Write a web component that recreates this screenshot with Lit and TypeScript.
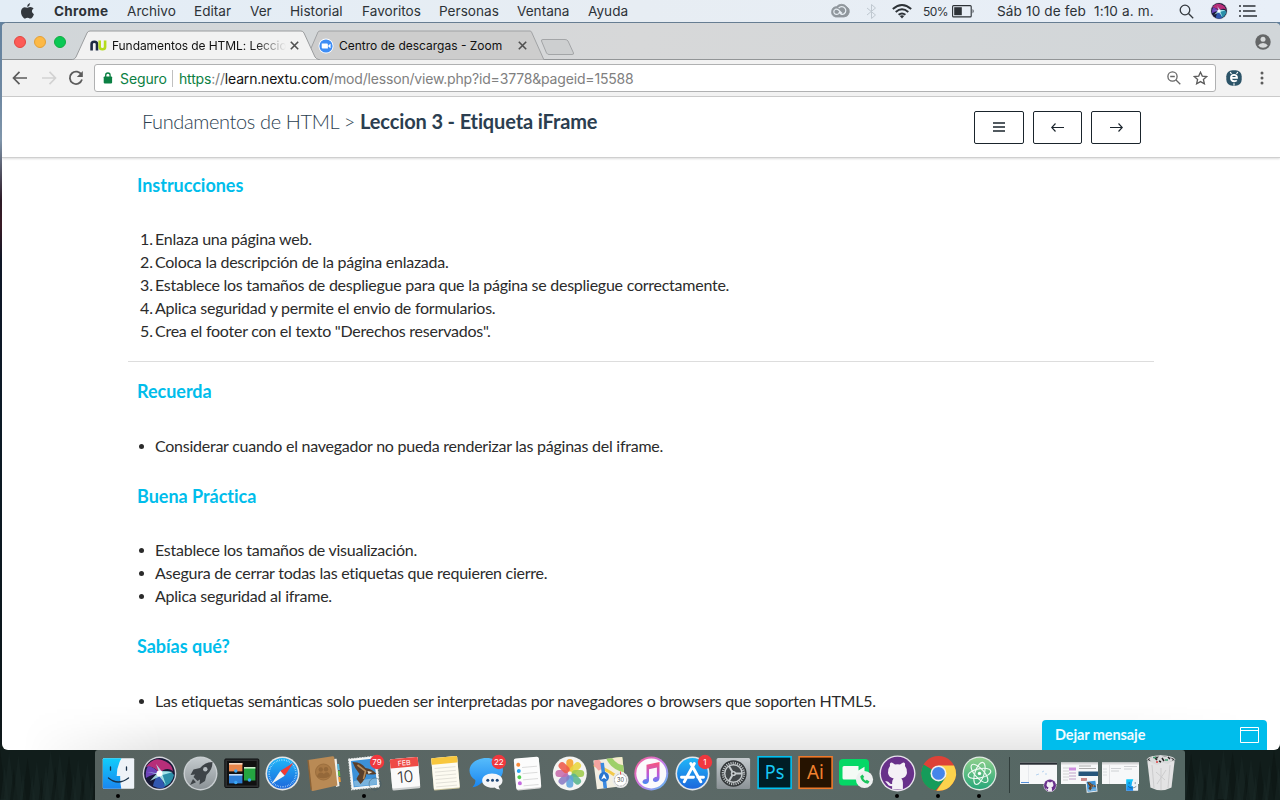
import { LitElement, html, css, svg } from "lit";
import { customElement } from "lit/decorators.js";

const MENU: [string, number][] = [
  ["Chrome", 73], ["Archivo", 67], ["Editar", 56], ["Ver", 40], ["Historial", 72],
  ["Favoritos", 77], ["Personas", 78], ["Ventana", 71], ["Ayuda", 60],
];

const STEPS = [
  "Enlaza una página web.",
  "Coloca la descripción de la página enlazada.",
  "Establece los tamaños de despliegue para que la página se despliegue correctamente.",
  "Aplica seguridad y permite el envio de formularios.",
  'Crea el footer con el texto "Derechos reservados".',
];

const badge = (n: string, cx: number, cy: number) => svg`
  <circle cx=${cx} cy=${cy} r="7.2" fill="#f0383e"/>
  <text x=${cx} y=${cy + 2.8} text-anchor="middle" font-size="8" fill="#fff" font-family="Inter, sans-serif">${n}</text>`;

const octocat = svg`<path d="M-7.5 -8.5 Q-8 -12.5 -6 -12.2 Q-4.5 -12 -2.5 -10 Q0 -10.6 2.5 -10 Q4.5 -12 6 -12.2 Q8 -12.5 7.5 -8.5 Q10 -5.5 9.5 -1.5 Q8.6 3.2 3.8 4 Q5.4 5.4 5.4 8 V15 H-5.4 V11.5 Q-9 12 -10.4 9 Q-11 7.5 -12.5 6.8 Q-9.5 6 -8 8.5 Q-7 10 -5.4 9.3 V8 Q-5.4 5.4 -3.8 4 Q-8.6 3.2 -9.5 -1.5 Q-10 -5.5 -7.5 -8.5Z" fill="#f4f0f6"/>`;

const bird = svg`
  <rect x="4.5" y="7.5" width="28" height="31" fill="#f4f6f6" stroke="#e4e7e8" stroke-dasharray="1.5 1.2" transform="rotate(-6 18 23)"/>
  <rect x="6.8" y="9.8" width="23.4" height="26.4" fill="#3c91d8" transform="rotate(-6 18 23)"/>
  <path d="M8.5 31 L31 28 L31.5 34.5 L9 36.5Z" fill="#79b3dd"/>
  <path d="M7 12 Q16 12 20 18 Q27 19 31 24 Q24 25 21 24 Q20 29 15 34 L11 29 Q12 26 14 24 Q9 18 7 12Z" fill="#5a3f2b"/>
  <path d="M12 15 L20 21 L18 29" stroke="#b58a58" stroke-width="1.6" fill="none"/>
  <path d="M22 21 l5 1 l-4 2z" fill="#eee3cd"/>`;

const petals = ["#f6a127", "#e9d53c", "#9ecb4b", "#58b58c", "#5fa3dc", "#8a7bc4", "#c76bab", "#ee5a4a"];

const finder = svg`
  <rect x="4.8" y="8.3" width="31.4" height="30.4" rx="1" fill="#eef3f8"/>
  <path d="M5.8 8.3 H23.5 Q18.8 16 18.7 26 H22.2 Q22 33 23.3 38.7 H5.8 Q4.8 38.7 4.8 37.7 V9.3 Q4.8 8.3 5.8 8.3Z" fill="url(#finderBlue)"/>
  <path d="M12.5 17v3.2 M28.5 17v3.2" stroke="#173049" stroke-width="1.3" stroke-linecap="round"/>
  <path d="M10.5 28 Q20 36 30.5 28" stroke="#173049" stroke-width="1.3" fill="none" stroke-linecap="round"/>`;

const siriBall = svg`
  <circle cx="20.5" cy="23.4" r="16.8" fill="#d5d5dc"/>
  <circle cx="20.5" cy="23.4" r="15.4" fill="#181a38"/>
  <path d="M7 17 Q14 7 23 10 Q33 13 34 21 Q27 16 20.5 23.4 Q14 15 7 17Z" fill="#b72e79"/>
  <path d="M7 28 Q6 21 9 16 Q15 17 20.5 23.4 Q13 24 7 28Z" fill="#6d43b8"/>
  <path d="M20.5 23.4 Q30 18 35 25 Q33 34 25 37 Q25 28 20.5 23.4Z" fill="#2b8fa9"/>
  <path d="M20.5 23.4 Q15 29 14 36 Q22 40 26 37 Q24 30 20.5 23.4Z" fill="#3157b0"/>
  <path d="M20.5 23.4 L17 14 L22.5 21 L34 22 L23.5 25 L27 35 L20.5 26.5 L11 31 L17.5 24 L8 22Z" fill="#b8f3f4" opacity=".85"/>
  <circle cx="20.5" cy="23.4" r="3" fill="#fff"/>`;

const miniWindow = (app: unknown) => svg`
  <rect x="2" y="12.5" width="37" height="21.5" fill="#f7f8f9"/>
  ${app}`;

const githubIcon = svg`
  <circle cx="20.5" cy="23.4" r="18" fill="#e7e2ec"/>
  <circle cx="20.5" cy="23.4" r="16.6" fill="#68308a"/>
  <g transform="translate(20.5 24.6)">${octocat}</g>`;

const ICONS: { art: unknown; dot?: boolean }[] = [
  { art: finder, dot: true },
  { art: siriBall },
  { art: svg`
    <circle cx="20.5" cy="23.4" r="17" fill="#c9ced1"/><circle cx="20.5" cy="23.4" r="15.6" fill="url(#steel)"/>
    <path d="M32.5 12 Q25 12 20 18 L13.5 19.5 L10.5 25 L15 24.5 L13.5 27 L17.5 31 L20 29.5 L19.5 34.5 L25 31 L26.5 25 Q32.5 20 32.5 12Z" fill="#3e4347"/>
    <circle cx="25.3" cy="19.3" r="2.2" fill="#b5bbbf"/><path d="M13 29 L10 35 L16 32.3Z" fill="#3e4347"/>` },
  { art: svg`
    <rect x="3.8" y="9" width="34" height="28.5" rx="1" fill="#2c2e2f" stroke="#0d0f10"/>
    <rect x="6" y="11" width="29.6" height="24.4" fill="#111"/>
    <rect x="8" y="13" width="13.4" height="8.4" fill="#e8864b"/><rect x="8" y="13" width="13.4" height="1.6" fill="#f3d9c3"/>
    <rect x="8" y="24" width="13.4" height="9.4" fill="#2f7fd6"/><rect x="8" y="24" width="13.4" height="1.6" fill="#c9dcf2"/>
    <rect x="23" y="17.5" width="11.4" height="13" fill="#25a541"/><rect x="23" y="17" width="11.4" height="1.6" fill="#cfeecd"/>
    <circle cx="14.8" cy="21" r="1.7" fill="#3aa8f5"/><circle cx="14.8" cy="32.5" r="1.7" fill="#3aa8f5"/><circle cx="28.4" cy="30" r="1.7" fill="#3aa8f5"/>` },
  { art: svg`
    <circle cx="20.5" cy="23.4" r="17" fill="#e3e5e7"/><circle cx="20.5" cy="23.4" r="15.4" fill="url(#safariBlue)"/>
    <circle cx="20.5" cy="23.4" r="13.4" fill="none" stroke="#d6efff" stroke-width="1.6" stroke-dasharray=".5 1.25"/>
    <path d="M31.5 12.8 L18.3 21 L22.7 25.8Z" fill="#f03a34"/><path d="M9.5 34 L18.3 21 L22.7 25.8Z" fill="#f3f3f3"/>` },
  { art: svg`
    <path d="M30 9 L33.6 8.8 L36.5 36 L33 37Z" fill="#f2efe9"/>
    <path d="M34 14 l2 0 l.8 6 l-2 0z" fill="#58b9dd"/><path d="M34.8 21 l2 0 l.6 5 l-2 0z" fill="#63b443"/><path d="M35.3 27 l2 0 l.5 5 l-2 0z" fill="#f09b38"/>
    <path d="M5 10 L29.5 6.2 Q31 6 31.2 7.4 L34.4 35.5 L10 41 Q8.6 41.3 8.3 39.8 L5 12Z" fill="#b98a55"/>
    <path d="M5 10 L8.3 39.8" stroke="#8b6236" stroke-width="1.4"/>
    <circle cx="20.5" cy="22" r="8" fill="#a97945" stroke="#9c6f3e"/>
    <circle cx="17.8" cy="19.5" r="2.2" fill="#946839"/><circle cx="23" cy="19.2" r="2.2" fill="#946839"/><path d="M14 27 Q14.5 22.5 18 22.5 Q20.5 22.5 20.8 24 Q22 22 24.5 22.3 Q27 23 27 26 Q22 30 14 27Z" fill="#946839"/>` },
  { art: svg`<g transform="translate(1.5 0)">${bird}</g>
    <circle cx="31" cy="34" r="6" fill="none" stroke="#3b5663" stroke-width="1" opacity=".45"/>${badge("79", 33, 12)}`, dot: true },
  { art: svg`
    <g transform="rotate(-5 20 23)"><rect x="6" y="8" width="28" height="31.5" rx="1.5" fill="#cfd2d2"/><rect x="6" y="8" width="28" height="29.5" rx="1.5" fill="#fafafa"/>
    <path d="M6 17.3 V9.5 Q6 8 7.5 8 H32.5 Q34 8 34 9.5 V17.3Z" fill="#ee4b46"/>
    <text x="20" y="15.4" text-anchor="middle" font-size="7" fill="#fff" font-family="Inter, sans-serif">FEB</text>
    <text x="20" y="32.5" text-anchor="middle" font-size="16" fill="#333" font-family="Inter, sans-serif" font-weight="300">10</text></g>` },
  { art: svg`
    <g transform="rotate(-5 20 23)"><rect x="6.5" y="7" width="26" height="32.5" rx="1" fill="#c9c29a"/><rect x="6.5" y="7" width="26" height="31.5" rx="1" fill="#fdfbf1"/>
    <rect x="6.5" y="7" width="26" height="6.5" rx="1" fill="#f8c73d"/>
    <path d="M9 17.5h21M9 21.2h21M9 24.9h21M9 28.6h21M9 32.3h21M9 36h21" stroke="#d9d7cf" stroke-width=".7"/></g>` },
  { art: svg`
    <path d="M19.5 8 C29 8 36 13.5 36 20.5 C36 27.5 29 33 19.5 33 Q17 33 14.8 32.5 Q11 36.5 5.5 37.3 Q9 34 8.3 30 Q2.5 26.5 2.5 20.5 C2.5 13.5 10 8 19.5 8Z" fill="url(#chatBlue)"/>
    <path d="M25 23.5 C31 23.5 35.5 26.5 35.5 30.5 Q35.5 34 31.7 36 Q31.5 38 33.3 39.6 Q29.5 39.3 27.5 37.5 Q25.5 38 23.5 37.7 C18.5 37 15.2 34.3 15.2 30.5 C15.2 26.5 19.5 23.5 25 23.5Z" fill="#f5f6f8"/>
    <circle cx="20.8" cy="30.3" r="1.5" fill="#1e4676"/><circle cx="25.5" cy="30.3" r="1.5" fill="#1e4676"/><circle cx="30.2" cy="30.3" r="1.5" fill="#1e4676"/>${badge("22", 31.8, 12)}` },
  { art: svg`
    <g transform="rotate(-5 20 23)"><rect x="7" y="8" width="25" height="31.5" rx="2" fill="#d4d4d4"/><rect x="7" y="7.5" width="25" height="30.8" rx="2" fill="#fcfcfc"/>
    <circle cx="11" cy="14" r="2" fill="#f98b38"/><circle cx="11" cy="20.2" r="2" fill="#2aa5f2"/><circle cx="11" cy="26.4" r="2" fill="#51cf4f"/><circle cx="11" cy="32.6" r="2" fill="#c56be0"/>
    <path d="M14.5 17h15M14.5 23.2h15M14.5 29.4h15M14.5 35.4h15" stroke="#cfcfcf" stroke-width=".7"/></g>` },
  { art: svg`
    <circle cx="20.8" cy="23.4" r="17" fill="#f4f4f2"/>
    ${petals.map((c, i) => svg`<rect x="17.3" y="9" width="7" height="12.5" rx="3.5" fill=${c} opacity=".88" transform=${`rotate(${i * 45} 20.8 23.4)`}/>`)}` },
  { art: svg`
    <g transform="rotate(-7 20 23)"><rect x="5" y="8.5" width="29" height="29" fill="#f3efe2"/><path d="M18 8.5H34V24Q22 20 18 8.5Z" fill="#9ed069"/><path d="M24 8.5H34V17Q27 15 24 8.5Z" fill="#f6ead0"/>
    <path d="M5 13 Q20 20 33 34" stroke="#f2c94b" stroke-width="3" fill="none"/><path d="M6 8.5 h5 l4 8 l-6 3 l-4 -6z" fill="#f4a4a0"/>
    <path d="M13.5 12v25.5" stroke="#3c8ae0" stroke-width="3.5"/></g>
    <circle cx="14" cy="27" r="5" fill="#2876cf"/><path d="M14 23.8 l2.8 5.6 l-2.8 -1.4 l-2.8 1.4z" fill="#fff"/>
    <circle cx="30.5" cy="30" r="8" fill="#e9eaeb"/><circle cx="30.5" cy="30" r="6" fill="#fff" stroke="#777" stroke-width=".8" stroke-dasharray=".7 .8"/>
    <text x="30.5" y="32" text-anchor="middle" font-size="5.6" fill="#444" font-family="Inter, sans-serif">30</text><path d="M30.5 21.5v3" stroke="#e55"/>` },
  { art: svg`
    <circle cx="20.3" cy="23.4" r="17" fill="url(#tunesRing)"/><circle cx="20.3" cy="23.4" r="15" fill="#fbfafc"/>
    <path d="M15.5 14.8 L28.5 12 V28 Q28.3 31.4 24.8 31.9 Q21.8 32 21.9 29.6 Q22.2 27.2 25.9 26.8 V17.5 L18 19.2 V30.5 Q17.7 33.6 14.3 34 Q11.3 34 11.5 31.6 Q11.9 29.2 15.5 28.9Z" fill="url(#tunesNote)"/>` },
  { art: svg`
    <circle cx="20.5" cy="23.4" r="17" fill="#e2e5e9"/><circle cx="20.5" cy="23.4" r="15.4" fill="url(#safariBlue)"/>
    <path d="M18.8 13.5 L28.8 31.8 M22.3 13.5 L12.3 31.8 M9.5 27.3 H21.5 M25.8 27.3 H31.5" stroke="#fff" stroke-width="2.9" stroke-linecap="round"/>${badge("1", 33, 12)}` },
  { art: svg`
    <rect x="3.6" y="8" width="33.5" height="31" rx="1.5" fill="url(#steel)"/>
    <circle cx="20.4" cy="23.5" r="13.2" fill="#34383a"/><circle cx="20.4" cy="23.5" r="10.5" fill="none" stroke="#bfc4c6" stroke-width="2.4" stroke-dasharray="1.1 1.1"/>
    <circle cx="20.4" cy="23.5" r="8.7" fill="#43484a" stroke="#c6cbcd" stroke-width="1.4"/>
    <path d="M20.4 23.5 H29 M20.4 23.5 L16 16 M20.4 23.5 L16 31" stroke="#c6cbcd" stroke-width="2"/><circle cx="20.4" cy="23.5" r="2.6" fill="#c6cbcd"/><circle cx="20.4" cy="23.5" r="1.1" fill="#333"/>` },
  { art: svg`
    <rect x="4.1" y="6.8" width="33" height="31.5" fill="#001d26" stroke="#00c2f3" stroke-width="1.6"/>
    <text x="20.6" y="29" text-anchor="middle" font-size="19" font-family="'Noto Sans', sans-serif" fill="#17c8f6" textLength="19.5" lengthAdjust="spacingAndGlyphs">Ps</text>` },
  { art: svg`
    <rect x="4.1" y="6.8" width="33" height="31.5" fill="#261300" stroke="#ef7a2b" stroke-width="1.6"/>
    <text x="20.4" y="29" text-anchor="middle" font-size="19" font-family="'Noto Sans', sans-serif" fill="#f2822f" textLength="17" lengthAdjust="spacingAndGlyphs">Ai</text>` },
  { art: svg`
    <rect x="3" y="9" width="30" height="26.5" rx="4" fill="#05d866"/>
    <path d="M8 16 h14.5 v13.5 h-14.5 Q6.5 29.5 6.5 28 V17.5 Q6.5 16 8 16z M22.5 20.5 L28.5 16.8 V28 L22.5 25z" fill="#f4faf5"/>
    <circle cx="28.5" cy="29.5" r="8.6" fill="#eef0f0"/><path d="M24.2 26.5 Q25.4 32.8 32 33.8 L33.5 31.5 L30.8 29.8 L29.7 30.8 Q27.6 29.6 27.2 27.9 L28.2 26.8 L26.4 24.5Z" fill="#1ac45b"/>` },
  { art: githubIcon, dot: true },
  { art: svg`
    <circle cx="20.5" cy="23.4" r="17.4" fill="#dd4237"/>
    <path d="M20.5 23.4 L5.6 14.4 A17.4 17.4 0 0 0 17.5 40.6 L28 27.8Z" fill="#159c5a"/>
    <path d="M20.5 15.4 H36 A17.4 17.4 0 0 1 18.5 40.7 L27.6 27.5Z" fill="#fcd34c"/>
    <circle cx="20.5" cy="23.4" r="8" fill="#f1f1f1"/><circle cx="20.5" cy="23.4" r="6.4" fill="#4585ea"/>`, dot: true },
  { art: svg`
    <circle cx="20.5" cy="23.4" r="17" fill="#dfe9e3"/><circle cx="20.5" cy="23.4" r="15.7" fill="url(#atomGreen)"/>
    <g fill="none" stroke="#effaf3" stroke-width="1.1"><ellipse cx="20.5" cy="23.4" rx="4.6" ry="11.5" transform="rotate(18 20.5 23.4)"/><ellipse cx="20.5" cy="23.4" rx="4.6" ry="11.5" transform="rotate(78 20.5 23.4)"/><ellipse cx="20.5" cy="23.4" rx="4.6" ry="11.5" transform="rotate(-42 20.5 23.4)"/></g><circle cx="20.5" cy="23.4" r="1.7" fill="#fff"/>`, dot: true },
];

const RIGHT_ICONS = [
  miniWindow(svg`<rect x="2" y="12.5" width="37" height="2.2" fill="#272c33"/><path d="M10.5 15v19" stroke="#dfe3e8" stroke-width=".7"/><path d="M3 32.5h8" stroke="#5590d8"/><path d="M18 25l3-1M24 22l2-1M27 24l2 0" stroke="#b6d3f0"/>
    <g transform="translate(32 35.5) scale(.36) translate(-20.5 -23.4)">${githubIcon}</g>`),
  miniWindow(svg`<rect x="2" y="12.5" width="37" height="2" fill="#d8d8da"/><path d="M4 18h6M4 21h6M4 24h6M4 27h6M4 30h5" stroke="#c9c9cc" stroke-width=".8"/><rect x="10" y="17.5" width="7" height="3" fill="#d08fe0"/><path d="M10 23h7M10 26h7M10 29h7" stroke="#c0a0c8"/><path d="M20 16h12M20 18.5h17" stroke="#999" stroke-width=".8"/><rect x="19.5" y="21.5" width="19.5" height="4.5" fill="#27567b"/><rect x="22" y="28" width="6" height="3" fill="#c88"/>
    <g transform="translate(25.5 27.5) scale(.38)">${bird}</g>`),
  miniWindow(svg`<rect x="2" y="12.5" width="37" height="2" fill="#d8d8da"/><path d="M9.5 15v19" stroke="#e2e2e5"/><path d="M11 18.5h10M11 21h8M24 16.5h13M24 19h8" stroke="#c4c6ca" stroke-width=".8"/><path d="M3 19h4M3 22h4M3 25h4" stroke="#d3d6da" stroke-width=".8"/>
    <g transform="translate(24.4 26) scale(.38)">${finder}</g>`),
  svg`<path d="M6.3 11 L9.4 37.5 Q20 43 30.5 37.5 L33.6 11Z" fill="#e3e3e4"/>
    <path d="M11 15 L13 38 M20 18 V40 M29 15 L27 38 M15 22 L24 30 M25 20 L16 34" stroke="#c9c9cb" stroke-width=".9"/>
    <ellipse cx="20" cy="9.5" rx="13.7" ry="3.6" fill="#3b3b3c" stroke="#ececec"/>
    <path d="M8 9 l4-3 l4 3 l3-4 l5 2 l4-1 l4 4 l-5 4 l-6-1 l-5 2 l-5-2z" fill="#d9dadb"/><path d="M14 8l2 2M21 8l2 3M27 7l2 2M18 11l2 1" stroke="#222" stroke-width="1.5"/><path d="M12 7.5h3M24 10h3" stroke="#3f9c72" stroke-width="1.3"/><circle cx="16" cy="12" r="1" fill="#d44"/>`,
];

@customElement("app-root")
export class AppRoot extends LitElement {
  static styles = css`
    :host { display: block; width: 1280px; height: 800px; overflow: hidden; font-family: Inter, sans-serif; }
    * { box-sizing: border-box; }
    svg { display: block; flex: none; }
    .desktop { width: 1280px; height: 800px; display: flex; flex-direction: column; position: relative; overflow: hidden;
      background: linear-gradient(#5f7f9d 0, #7089a2 100px, #8096ab 140px, #2c1a26 200px, #3a1a25 225px, #0e1626 260px, #0c1a26 420px, #0c161a 700px, #131d1d 800px); }
    .menubar { height: 22px; flex: none; display: flex; align-items: center; background: linear-gradient(90deg, #e3edf6, #e7edf3 50%, #e8eff8); color: #2d3237; font-size: 13.6px; }
    .apple { margin-left: 20px; }
    .menus { display: flex; margin-left: 19px; }
    .menus span { white-space: nowrap; }
    .menus span:first-child { font-weight: 700; letter-spacing: .3px; }
    .status { margin-left: auto; display: flex; align-items: center; }
    .pct { font-size: 12px; letter-spacing: -.55px; width: 29px; white-space: nowrap; margin-left: 11px; }
    .clock { width: 157px; margin-left: 22px; white-space: pre; letter-spacing: .13px; }
    .window { position: relative; height: 728px; flex: none; border-top: 1px solid #667d92; margin-left: 2px; border-radius: 5px 5px 6px 6px; background: #fff; overflow: hidden; display: flex; flex-direction: column; }
    .strip { height: 37px; flex: none; display: flex; background: linear-gradient(90deg, #d1d6d9, #d7d8d9 50%, #d1d6d9); border-bottom: 1px solid #929597; position: relative; }
    .lights { display: flex; gap: 8px; padding: 13px 0 0 12px; width: 71px; }
    .light { width: 12px; height: 12px; border-radius: 50%; border: 1px solid #e2463f; background: #fc5b57; }
    .light.y { background: #fdb946; border-color: #e4a035; }
    .light.g { background: #0ac855; border-color: #12ac40; }
    .tabs { position: absolute; left: 0; top: 0; }
    .tab-row { position: relative; display: flex; align-items: center; height: 29px; margin-top: 8px; color: #111; font-size: 12px; white-space: nowrap; }
    .t1 { width: 174px; margin-left: 5px; letter-spacing: -.08px; -webkit-mask-image: linear-gradient(90deg, #000 82%, transparent); }
    .t2 { width: 175px; margin-left: 5px; }
    .account { margin: 11px 9px 0 auto; }
    .toolbar { height: 37px; flex: none; display: flex; align-items: center; background: #f2f2f2; border-bottom: 1px solid #ccc; padding-left: 10px; }
    .omni { display: flex; align-items: center; width: 1122px; height: 28px; margin-left: 10px; border: 1px solid #b0b1b2; border-radius: 3px; background: #fff; font-size: 14px; padding-left: 8px; color: #808080; white-space: nowrap; }
    .secure { color: #0b8043; margin-left: 7px; width: 52px; letter-spacing: -.1px; }
    .url { border-left: 1px solid #c0c0c0; padding-left: 6px; line-height: 17px; flex: 1; letter-spacing: -.175px; }
    .url i { font-style: normal; color: #0b8043; } .url b { font-weight: 400; color: #111; }
    .site { flex: 1; font-family: Lato, sans-serif; color: #2b2b2b; display: flex; flex-direction: column; }
    .head { height: 61px; flex: none; display: flex; border-bottom: 1px solid #cfcfcf; box-shadow: 0 1px 2px #0002; padding-left: 140px; }
    .crumb { margin: 11px 0 0; font-size: 20px; line-height: 26px; font-weight: 300; color: #2b3e50; width: 832px; white-space: nowrap; letter-spacing: -.37px; }
    .crumb b { font-weight: 700; letter-spacing: -.13px; }
    .buttons { display: flex; gap: 9px; padding-top: 14px; }
    .btn { width: 50px; height: 33px; border: 1px solid #1a242c; border-radius: 2px; display: flex; align-items: center; justify-content: center; background: #fff; padding: 0; }
    .btn.mid { width: 49px; }
    .body { padding: 14px 0 0 135px; font-size: 16px; line-height: 23px; }
    h2 { margin: 0; color: #00bdeb; font-size: 18px; font-weight: 700; line-height: 26px; letter-spacing: -.02px; }
    ol, ul { margin: 0; padding: 0; list-style: none; }
    li { display: flex; white-space: nowrap; letter-spacing: -.25px; }
    .n { width: 18px; padding-left: 3px; flex: none; letter-spacing: -.1px; }
    ul .n::before { content: ""; display: block; width: 5px; height: 5px; border-radius: 50%; background: #2b2b2b; margin: 10px 0 0 -1px; }
    .steps { margin-top: 29px; }
    hr { border: 0; border-top: 1px solid #ddd; width: 1026px; margin: 19px 0 16px -9px; }
    .list { margin: 30px 0 26px; }
    .list.b { margin: 29px 0 26px; }
    .chat { position: absolute; left: 1042px; top: 720px; width: 225px; height: 30px; border-radius: 4px 4px 0 0; background: #00bdec; color: #f2fbff; font: 700 14.5px/30px Lato, sans-serif; letter-spacing: -.1px; padding: 0 8px 0 13px; display: flex; justify-content: space-between; align-items: center; white-space: nowrap; }
    .shade { position: absolute; left: 2px; top: 705px; width: 1278px; height: 45px; background: linear-gradient(#0000, #00000006 40%, #00000018); -webkit-mask-image: linear-gradient(90deg, transparent 20px, #000 160px, #000 1120px, transparent 1250px); }
    .dock { position: relative; width: 1090px; height: 50px; margin-left: 95px; padding-left: 3px; display: flex; background: linear-gradient(90deg, #56625f, #5c6967 50%, #546763); border-radius: 3px 3px 0 0; flex: none; }
    .sep { width: 18px; padding: 7px 0 7px 9px; } .sep::before { content: ""; display: block; width: 1px; height: 36px; background: #303d3b; }
    .trees { position: absolute; left: 0; top: 745px; }
  `;

  render() {
    return html`<div class="desktop">
      <svg class="trees" width="1280" height="55"><rect width="1280" height="55" fill="#111d1b"/>
        ${Array.from({ length: 44 }, (_, i) => {
          const x = i < 22 ? i * 4.6 : 1182 + (i - 22) * 4.6;
          const y = 4 + ((i * 17) % 31);
          return svg`<path d="M${x} ${y} l6 50 h-12z" fill=${i % 3 ? "#1b2b28" : "#091110"} opacity=".4"/>`;
        })}</svg>
      <div class="menubar">
        <svg class="apple" width="15" height="18" viewBox="0 0 15 18"><path d="M10.2 1 Q10 4 7.2 5.1 Q7 2.2 10.2 1Z M7.4 5.8 Q10 4.4 12.3 5.4 L13.6 6.5 Q10 9 13.9 12.3 Q12.6 16.2 10.6 16.6 Q9.5 16.5 8.7 16 Q7.5 15.5 6.3 16 Q5 16.8 4.2 16.5 Q1 14 1 9.8 Q1.2 5.8 4.5 5.2 Q6 5.2 7.4 5.8Z" fill="#33383d"/></svg>
        <div class="menus">${MENU.map(([t, w]) => html`<span style="width:${w}px">${t}</span>`)}</div>
        <div class="status">
          <svg width="20" height="16" viewBox="0 0 20 16" fill="none" stroke="#8f969c"><path d="M5.5 14 H14 A5.6 5.6 0 0 0 16.6 3.6 A6.6 6.6 0 0 0 6.6 3.6 A5.3 5.3 0 0 0 5.5 14Z" fill="#8f969c" stroke-width=".8"/><path d="M9 10.4 Q7.6 11.6 6 11.4 A2.7 2.7 0 0 1 5.6 6.2 Q7.4 6 8.8 7.3 L12 10.4 M8.6 5.2 Q10.6 2.8 13.5 4 Q16.7 6 15.4 9.4 Q13.6 12.4 10.8 11 L8.8 9" stroke="#e8eef4" stroke-width="1.2"/></svg>
          <svg style="margin-left:16px" width="11" height="17" viewBox="0 0 11 17"><path d="M1 5 L9.5 12 L5.5 15.5 V1.5 L9.5 5 L1 12" fill="none" stroke="#bfc8d0"/></svg>
          <svg style="margin-left:15px" width="20" height="15" viewBox="0 0 20 15" fill="none" stroke="#2d3237" stroke-width="1.9"><path d="M.8 5 Q10 -3 19.2 5 M3.7 8 Q10 2.6 16.3 8 M6.6 10.8 Q10 8 13.4 10.8"/><path d="M7.8 12 L10 14.6 L12.2 12 Q10 10.7 7.8 12Z" fill="#2d3237" stroke="none"/></svg>
          <span class="pct">50%</span>
          <svg width="23" height="13" viewBox="0 0 23 13"><rect x=".6" y=".6" width="18.6" height="11.3" rx="1" fill="none" stroke="#2d3237" stroke-width="1.1"/><rect x="2.2" y="2.2" width="7.6" height="8" fill="#2d3237"/><path d="M20.6 4 q2 2.2 0 4.5z" fill="#2d3237"/></svg>
          <span class="clock">Sáb 10 de feb  1:10 a. m.</span>
          <svg style="margin-left:25px" width="15" height="15" viewBox="0 0 15 15" fill="none" stroke="#33383d" stroke-width="1.3"><circle cx="6" cy="6" r="4.8"/><path d="M9.5 9.5 L14.2 14.2"/></svg>
          <svg style="margin-left:16px" width="18" height="18" viewBox="3 6 35 35">${siriBall}</svg>
          <svg style="margin:0 23px 0 11px" width="18" height="12" viewBox="0 0 18 12" stroke="#2d3237" stroke-width="1.7"><path d="M0 1h2M0 6h2M0 11h2M4 1h12.5M4 6h12.5M4 11h14"/></svg>
        </div>
      </div>
      <div class="window">
        <div class="strip">
          <svg class="tabs" width="580" height="37" viewBox="2 0 580 37"><path d="M306 37 L318 9 Q318.5 8 320 8 H530 Q531 8 531.5 9 L544 37Z" fill="#cdcdcd" stroke="#a0a2a4"/>
            <path d="M543 16.5 H565 Q567 16.5 568 18 L573.5 30 Q574 31.5 572 31.5 H549 Q547.5 31.5 546.5 30 L541.5 18 Q541 16.5 543 16.5Z" fill="#cdcfd0" stroke="#a3a5a7"/>
            <path d="M72 37 Q75 36 76 34 L87 10 Q88 8 90 8 H301 Q303 8 304 10 L315 34 Q316 36 320 37Z" fill="#f2f2f2" stroke="#9a9c9e"/></svg>
          <div class="lights"><span class="light"></span><span class="light y"></span><span class="light g"></span></div>
          <div class="tab-row">
            <svg style="margin-left:17px" width="17" height="11" viewBox="0 0 17 11" fill="none" stroke-width="2.6"><path d="M1.6 10.5 V4 Q1.6 1.8 4.3 1.8 Q7 1.8 7 4 V10.5" stroke="#1e2c42"/><path d="M9.7 .5 V7 Q9.7 9.2 12.4 9.2 Q15.1 9.2 15.1 7 V.5" stroke="#b4dc1d"/></svg>
            <span class="t1">Fundamentos de HTML: Leccio</span>
            <svg style="margin-left:4px" width="9" height="9" viewBox="0 0 9 9" stroke="#505050" stroke-width="1.6"><path d="M.8 .8 L8.2 8.2 M8.2 .8 L.8 8.2"/></svg>
            <svg style="margin-left:19px" width="16" height="16" viewBox="0 0 16 16"><circle cx="8" cy="8" r="7.5" fill="#fff"/><circle cx="8" cy="8" r="6.6" fill="#3e8df5"/><path d="M3.7 5.6 h5.2 q1 0 1 1 v3.8 h-5.2 q-1 0 -1-1z M10.4 7.3 L12.6 5.8 V10.2 L10.4 8.8z" fill="#fff"/></svg>
            <span class="t2">Centro de descargas - Zoom</span>
            <svg style="margin-left:4px" width="9" height="9" viewBox="0 0 9 9" stroke="#505050" stroke-width="1.6"><path d="M.8 .8 L8.2 8.2 M8.2 .8 L.8 8.2"/></svg>
          </div>
          <svg class="account" width="16" height="16" viewBox="0 0 16 16"><circle cx="8" cy="8" r="7.7" fill="#656768"/><circle cx="8" cy="5.3" r="2.5" fill="#d6d9da"/><path d="M3.2 11.5 Q4.5 9 8 9 Q11.5 9 12.8 11.5 Q11 13.8 8 13.8 Q5 13.8 3.2 11.5Z" fill="#d6d9da"/></svg>
        </div>
        <div class="toolbar">
          <svg width="16" height="14" viewBox="0 0 16 14" fill="none" stroke="#5c5c5c" stroke-width="1.7"><path d="M7.5 .8 L1.5 7 L7.5 13.2 M1.5 7 H15"/></svg>
          <svg style="margin-left:14px" width="15" height="14" viewBox="0 0 15 14" fill="none" stroke="#d2d2d2" stroke-width="1.7"><path d="M7.5 .8 L13.5 7 L7.5 13.2 M13.5 7 H0"/></svg>
          <svg style="margin-left:11px" width="16" height="16" viewBox="0 0 16 16"><path d="M13.6 5 A6.2 6.2 0 1 0 14 9.6" fill="none" stroke="#5c5c5c" stroke-width="1.8"/><path d="M14.8 1 V7 H8.8Z" fill="#5c5c5c"/></svg>
          <div class="omni">
            <svg width="10" height="12" viewBox="0 0 10 12"><rect x=".7" y="4.4" width="8.4" height="7" rx=".8" fill="#0b8043"/><path d="M2.7 5 V3.2 Q2.7 1 4.9 1 Q7.1 1 7.1 3.2 V5" fill="none" stroke="#0b8043" stroke-width="1.3"/></svg>
            <span class="secure">Seguro</span>
            <span class="url"><i>https</i>://<b>learn.nextu.com</b>/mod/lesson/view.php?id=3778&amp;pageid=15588</span>
            <svg width="14" height="14" viewBox="0 0 14 14" fill="none" stroke="#666" stroke-width="1.3"><circle cx="5.5" cy="5.5" r="4.6"/><path d="M9 9 L13.3 13.3 M3.2 5.5 H7.8"/></svg>
            <svg style="margin:0 7px 0 12px" width="15" height="14" viewBox="0 0 15 14"><path d="M7.5 1.2 L9.3 5.1 L13.7 5.6 L10.4 8.5 L11.4 12.8 L7.5 10.6 L3.6 12.8 L4.6 8.5 L1.3 5.6 L5.7 5.1Z" fill="none" stroke="#5c5c5c" stroke-width="1.3"/></svg>
          </div>
          <svg style="margin-left:10px" width="16" height="16" viewBox="0 0 16 16"><rect x=".3" y=".3" width="15.4" height="15.4" rx="6" fill="#2c5468"/><path d="M5 7.9 H11 Q11 4.9 8 4.9 Q5 4.9 5 8.1 Q5 11.3 8.2 11.3 Q9.8 11.3 10.8 10.4" stroke="#fff" stroke-width="1.9" fill="none"/><path d="M4.2 2.2 l1.3 1.6 M11.8 2.2 l-1.3 1.6 M8 13.2v2.4" stroke="#fff" stroke-width="1.1"/></svg>
          <svg style="margin-left:18px" width="4" height="14" viewBox="0 0 4 14" fill="#5c5c5c"><circle cx="2" cy="2" r="1.5"/><circle cx="2" cy="7" r="1.5"/><circle cx="2" cy="12" r="1.5"/></svg>
        </div>
        <div class="site">
          <div class="head">
            <h1 class="crumb">Fundamentos de HTML &gt; <b>Leccion 3 - Etiqueta iFrame</b></h1>
            <div class="buttons">
              <button class="btn"><svg width="12" height="11" viewBox="0 0 12 11" stroke="#1a242c" stroke-width="1.3"><path d="M0 1h12M0 5h12M0 9h12"/></svg></button>
              <button class="btn mid"><svg width="13" height="9" viewBox="0 0 13 9" fill="none" stroke="#1a242c" stroke-width="1.15"><path d="M4.5 .5 L.7 4.5 L4.5 8.5 M.7 4.5 H13"/></svg></button>
              <button class="btn"><svg width="13" height="9" viewBox="0 0 13 9" fill="none" stroke="#1a242c" stroke-width="1.15"><path d="M8.5 .5 L12.3 4.5 L8.5 8.5 M12.3 4.5 H0"/></svg></button>
            </div>
          </div>
          <div class="body">
            <h2>Instrucciones</h2>
            <ol class="steps">${STEPS.map((s, i) => html`<li><span class="n">${i + 1}.</span><span>${s}</span></li>`)}</ol>
            <hr />
            <h2>Recuerda</h2>
            <ul class="list"><li><span class="n"></span><span>Considerar cuando el navegador no pueda renderizar las páginas del iframe.</span></li></ul>
            <h2>Buena Práctica</h2>
            <ul class="list b">
              <li><span class="n"></span><span>Establece los tamaños de visualización.</span></li>
              <li><span class="n"></span><span>Asegura de cerrar todas las etiquetas que requieren cierre.</span></li>
              <li><span class="n"></span><span>Aplica seguridad al iframe.</span></li>
            </ul>
            <h2>Sabías qué?</h2>
            <ul class="list"><li><span class="n"></span><span>Las etiquetas semánticas solo pueden ser interpretadas por navegadores o browsers que soporten HTML5.</span></li></ul>
          </div>
        </div>
      </div>
      <div class="shade"></div>
      <div class="chat"><span>Dejar mensaje</span><svg width="19" height="16" viewBox="0 0 19 16" fill="none" stroke="#fff"><path d="M.5 .5 H18.5 V15.5 H.5Z M.5 3.5 H18.5"/></svg></div>
      <div class="dock">
        ${ICONS.map((it) => html`<svg width="41" height="50" viewBox="0 0 41 50"><defs>
          <linearGradient id="finderBlue" x2="0" y2="1"><stop stop-color="#10cdfb"/><stop offset="1" stop-color="#1b86f0"/></linearGradient>
          <linearGradient id="steel" x2="0" y2="1"><stop stop-color="#c4cacd"/><stop offset="1" stop-color="#8b9296"/></linearGradient>
          <linearGradient id="safariBlue" x2="0" y2="1"><stop stop-color="#1fb6f8"/><stop offset="1" stop-color="#1c67dc"/></linearGradient>
          <linearGradient id="chatBlue" x2="0" y2="1"><stop stop-color="#56bcfb"/><stop offset="1" stop-color="#1a86f0"/></linearGradient>
          <linearGradient id="tunesRing" x2="1" y2="1"><stop stop-color="#fa5c8c"/><stop offset=".5" stop-color="#c97ae8"/><stop offset="1" stop-color="#4cc2f5"/></linearGradient>
          <linearGradient id="tunesNote" x2="0" y2="1"><stop stop-color="#fa5578"/><stop offset=".6" stop-color="#b65be0"/><stop offset="1" stop-color="#3f8df2"/></linearGradient>
          <linearGradient id="atomGreen" x2="0" y2="1"><stop stop-color="#8fd08c"/><stop offset="1" stop-color="#29a77a"/></linearGradient>
        </defs>${it.art}${it.dot ? svg`<circle cx="20" cy="46" r="2" fill="#000"/>` : ""}</svg>`)}
        <div class="sep"></div>
        ${RIGHT_ICONS.map((a) => html`<svg width="41" height="50" viewBox="0 0 41 50">${a}</svg>`)}
      </div>
    </div>`;
  }
}
